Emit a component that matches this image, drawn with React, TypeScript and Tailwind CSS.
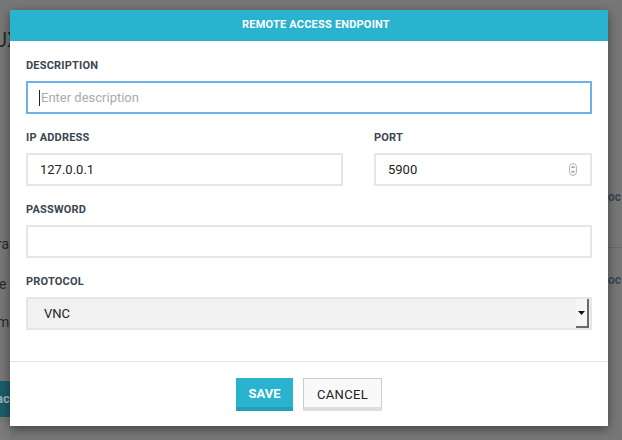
import React from "react";

const font = { fontFamily: "Roboto, 'Liberation Sans', sans-serif" };

const Label = ({ children }: { children: React.ReactNode }) => (
  <div className="text-[11px] leading-[14px] font-bold tracking-[0.2px] text-[#3a4651] mb-[8px]">
    {children}
  </div>
);

const PortSpinner = () => (
  <svg width="8" height="13" viewBox="0 0 8 13" className="shrink-0">
    <rect x="0.5" y="0.5" width="7" height="12" rx="3.5" fill="#fafafa" stroke="#b8b8b8" />
    <path d="M2.5 5 L4 3.5 L5.5 5" fill="none" stroke="#555" strokeWidth="0.9" />
    <path d="M2.5 8 L4 9.5 L5.5 8" fill="none" stroke="#555" strokeWidth="0.9" />
  </svg>
);

const App = () => {
  return (
    <div className="w-[622px] h-[440px] bg-[#777777] overflow-hidden flex" style={font}>
      {/* Left strip of the dimmed page behind */}
      <div className="w-[10px] shrink-0 overflow-hidden flex flex-col">
        <div className="mt-[30px] -ml-[6px] text-[20px] leading-[20px] text-[#262626] whitespace-nowrap">UX</div>
        <div className="mt-[186px] -ml-[3px] text-[14px] leading-[16px] text-[#2a2a2a]">ra</div>
        <div className="mt-[24px] -ml-[1px] text-[14px] leading-[16px] text-[#2a2a2a]">e</div>
        <div className="mt-[22px] -ml-[3px] text-[14px] leading-[16px] text-[#2a2a2a]">m</div>
        <div className="mt-[51px] h-[40px] w-[24px] bg-[#1b5c6a] flex items-center -ml-[2px]">
          <span className="text-[13px] font-bold text-[#9bb4ba] -ml-[2px]">ac</span>
        </div>
        <div className="mt-[5px] h-[20px] w-[10px] bg-[#7b7b7b]" />
      </div>

      {/* Modal */}
      <div className="w-[598px] h-[416px] mt-[10px] shrink-0 bg-white flex flex-col shadow-[0_3px_10px_rgba(0,0,0,0.45)] relative z-10">
        <div className="h-[31px] bg-[#29b3ce] flex items-center justify-center pl-[14px]">
          <span className="text-white text-[11px] font-bold tracking-[0.2px]">REMOTE ACCESS ENDPOINT</span>
        </div>

        <div className="px-[16px] pt-[18px] pb-[31px] flex flex-col">
          <Label>DESCRIPTION</Label>
          <div className="h-[33px] border-2 border-[#6db1e8] flex items-center pl-[11px]">
            <span className="w-px h-[16px] bg-[#222] mr-[1px]" />
            <span className="text-[13px] text-[#ababab]">Enter description</span>
          </div>

          <div className="flex gap-[31px] mt-[17px]">
            <div className="w-[317px] flex flex-col">
              <Label>IP ADDRESS</Label>
              <div className="h-[33px] border-2 border-[#e6e6e6] flex items-center pl-[12px] text-[13px] text-[#222]">
                127.0.0.1
              </div>
            </div>
            <div className="flex-1 flex flex-col">
              <Label>PORT</Label>
              <div className="h-[33px] border-2 border-[#e6e6e6] flex items-center justify-between pl-[12px] pr-[13px] text-[13px] text-[#222]">
                <span>5900</span>
                <PortSpinner />
              </div>
            </div>
          </div>

          <div className="mt-[17px]">
            <Label>PASSWORD</Label>
            <div className="h-[33px] border-2 border-[#e6e6e6]" />
          </div>

          <div className="mt-[17px]">
            <Label>PROTOCOL</Label>
            <div className="h-[33px] border-2 border-[#e6e6e6] bg-[#f1f1f1] flex items-center justify-between pl-[16px] pr-[1px]">
              <span className="text-[13px] text-[#222]">VNC</span>
              <div className="h-[29px] w-[13px] bg-[#f6f6f6] border-r-2 border-b-2 border-[#6a6a6a] flex items-center justify-center">
                <svg width="7" height="4" viewBox="0 0 7 4">
                  <path d="M0 0 H7 L3.5 4 Z" fill="#111" />
                </svg>
              </div>
            </div>
          </div>
        </div>

        <div className="border-t border-[#e3e3e3] flex-1 flex items-start justify-center gap-[10px] pt-[16px]">
          <button className="w-[57px] h-[33px] bg-[#29b3ce] border-b-4 border-[#22a1b9] text-white text-[13px] font-bold flex items-center justify-center pt-[3px]">
            SAVE
          </button>
          <button className="w-[79px] h-[33px] bg-[#f9f9f9] border border-[#cdcdcd] border-b-4 border-b-[#dedede] text-[#222] text-[13px] flex items-center justify-center pt-[3px] tracking-[0.3px]">
            CANCEL
          </button>
        </div>
      </div>

      {/* Right strip of the dimmed page behind */}
      <div className="flex-1 overflow-hidden flex flex-col">
        <div className="mt-[190px] text-[12px] leading-[14px] font-bold text-[#3a4650] whitespace-nowrap">oc</div>
        <div className="mt-[43px] h-px bg-[#6b6b6b]" />
        <div className="mt-[25px] text-[12px] leading-[14px] font-bold text-[#3a4650] whitespace-nowrap">oc</div>
      </div>
    </div>
  );
};

export default App;
